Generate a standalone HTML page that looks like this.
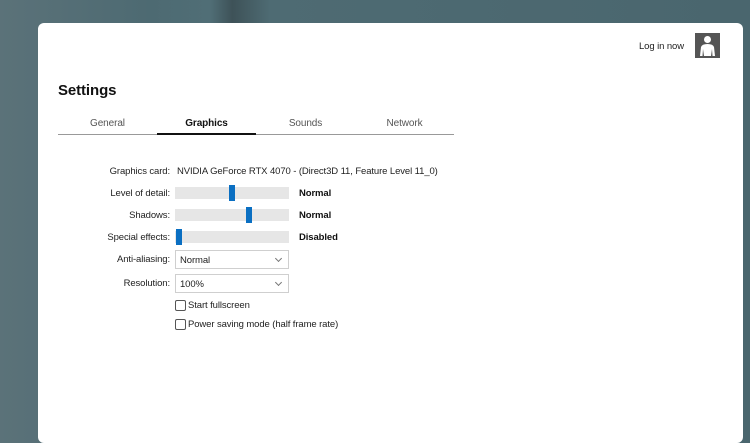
<!DOCTYPE html>
<html><head><style>
*{margin:0;padding:0;box-sizing:border-box}
body{width:750px;height:426px;overflow:hidden;background:linear-gradient(90deg,#5b7279 0%,#4d6a72 20%,#506e76 28%,#3e5258 31%,#4e6b73 36%,#4a666e 100%);font-family:"Liberation Sans",sans-serif;position:relative;letter-spacing:-0.1px}
.card{position:absolute;left:38px;top:23px;width:705px;height:420px;background:#fff;border-radius:6px}
.a{position:absolute;font-size:9.5px;color:#222;white-space:nowrap}
.lbl{position:absolute;right:573px;font-size:9.5px;color:#222;white-space:nowrap}
.sl{position:absolute;left:137px;width:114px;height:12px;background:#e6e6e6}
.th{position:absolute;top:-2px;width:6px;height:16px;background:#0a6fc2}
.val{position:absolute;left:261px;font-size:9.5px;font-weight:bold;color:#111}
.dd{position:absolute;left:137px;width:114px;height:19px;border:1px solid #cfcfcf;font-size:9.5px;padding:4px 0 0 4px;color:#222}
.dd:after{content:"";position:absolute;right:7px;top:5px;width:4px;height:4px;border-right:1px solid #777;border-bottom:1px solid #777;transform:rotate(45deg)}
.cb{position:absolute;left:137px;width:11px;height:11px;border:1px solid #555;border-radius:2px}
.ct{position:absolute;left:150px;font-size:9.5px;color:#222}
</style></head><body>
<div class="card">
<div class="a" style="left:601px;top:18px;font-size:9.5px">Log in now</div>
<div style="position:absolute;left:657px;top:10px;width:25px;height:25px;background:#555">
<svg width="25" height="25" viewBox="0 0 25 25"><circle cx="12.5" cy="6.5" r="3.5" fill="#fff"/><path d="M5 23 L6 14 Q7 11 12.5 11 Q18 11 19 14 L20 23 L17.5 23 L17 16 L16 23 L9 23 L8 16 L7.5 23Z" fill="#fff"/></svg></div>
<div class="a" style="left:20px;top:59px;font-size:15px;font-weight:bold;color:#111">Settings</div>
<div style="position:absolute;left:20px;top:111px;width:396px;height:1px;background:#999"></div>
<div style="position:absolute;left:119px;top:110px;width:99px;height:2px;background:#111"></div>
<div class="a" style="left:20px;width:99px;text-align:center;top:95px;font-size:10px;color:#555">General</div>
<div class="a" style="left:119px;width:99px;text-align:center;top:95px;font-size:10px;font-weight:bold;color:#111">Graphics</div>
<div class="a" style="left:218px;width:99px;text-align:center;top:95px;font-size:10px;color:#555">Sounds</div>
<div class="a" style="left:317px;width:99px;text-align:center;top:95px;font-size:10px;color:#555">Network</div>

<div class="lbl" style="top:143px">Graphics card:</div>
<div class="a" style="left:139px;top:143px">NVIDIA GeForce RTX 4070 - (Direct3D 11, Feature Level 11_0)</div>
<div class="lbl" style="top:165px">Level of detail:</div>
<div class="sl" style="top:164px"><div class="th" style="left:54px"></div></div>
<div class="val" style="top:165px">Normal</div>
<div class="lbl" style="top:187px">Shadows:</div>
<div class="sl" style="top:186px"><div class="th" style="left:71px"></div></div>
<div class="val" style="top:187px">Normal</div>
<div class="lbl" style="top:209px">Special effects:</div>
<div class="sl" style="top:208px"><div class="th" style="left:1px"></div></div>
<div class="val" style="top:209px">Disabled</div>
<div class="lbl" style="top:231px">Anti-aliasing:</div>
<div class="dd" style="top:227px">Normal</div>
<div class="lbl" style="top:255px">Resolution:</div>
<div class="dd" style="top:251px">100%</div>
<div class="cb" style="top:277px"></div><div class="ct" style="top:277px">Start fullscreen</div>
<div class="cb" style="top:296px"></div><div class="ct" style="top:296px">Power saving mode (half frame rate)</div>
</div>
</body></html>
